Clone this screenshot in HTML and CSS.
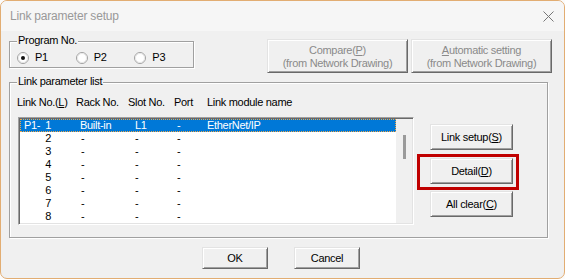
FILE: index.html
```html
<!DOCTYPE html>
<html>
<head>
<meta charset="utf-8">
<title>Link parameter setup</title>
<link rel="stylesheet" href="styles.css">
</head>
<body>
<div class="window">
  <div class="titlebar">
    <span class="title">Link parameter setup</span>
    <svg class="close" width="11" height="11" viewBox="0 0 11 11"><path d="M0.5 0.5 L10.5 10.5 M10.5 0.5 L0.5 10.5" stroke="#777" stroke-width="1" fill="none"/></svg>
  </div>

  <div class="top-row">
    <div class="group program">
      <span class="legend">Program No.</span>
      <div class="radios">
        <div class="radio">
          <svg width="12" height="12" viewBox="0 0 12 12"><circle cx="6" cy="6" r="5.5" fill="#fff" stroke="#a0a0a0"/><circle cx="6" cy="6" r="4.5" fill="none" stroke="#e6e6e6"/><circle cx="6" cy="6" r="2" fill="#111"/></svg>
          <span>P1</span>
        </div>
        <div class="radio">
          <svg width="12" height="12" viewBox="0 0 12 12"><circle cx="6" cy="6" r="5.5" fill="#fff" stroke="#a0a0a0"/><circle cx="6" cy="6" r="4.5" fill="none" stroke="#e6e6e6"/></svg>
          <span>P2</span>
        </div>
        <div class="radio">
          <svg width="12" height="12" viewBox="0 0 12 12"><circle cx="6" cy="6" r="5.5" fill="#fff" stroke="#a0a0a0"/><circle cx="6" cy="6" r="4.5" fill="none" stroke="#e6e6e6"/></svg>
          <span>P3</span>
        </div>
      </div>
    </div>
    <button class="btn wide compare" disabled>Compare(<u>P</u>)<br>(from Network Drawing)</button>
    <button class="btn wide auto" disabled><u>A</u>utomatic setting<br>(from Network Drawing)</button>
  </div>

  <div class="group list-group">
    <span class="legend">Link parameter list</span>
    <div class="list-col">
      <div class="header">
        <span class="h1">Link No.(<u>L</u>)</span>
        <span class="h2">Rack No.</span>
        <span class="h3">Slot No.</span>
        <span class="h4">Port</span>
        <span class="h5">Link module name</span>
      </div>
      <div class="listbox">
        <div class="rows">
          <div class="row selected"><span class="c1"><span class="pre">P1-</span><span class="num">1</span></span><span class="c2">Built-in</span><span class="c3">L1</span><span class="c4">-</span><span class="c5">EtherNet/IP</span></div>
          <div class="row"><span class="c1"><span class="pre"></span><span class="num">2</span></span><span class="c2 dash">-</span><span class="c3">-</span><span class="c4">-</span><span class="c5"></span></div>
          <div class="row"><span class="c1"><span class="pre"></span><span class="num">3</span></span><span class="c2 dash">-</span><span class="c3">-</span><span class="c4">-</span><span class="c5"></span></div>
          <div class="row"><span class="c1"><span class="pre"></span><span class="num">4</span></span><span class="c2 dash">-</span><span class="c3">-</span><span class="c4">-</span><span class="c5"></span></div>
          <div class="row"><span class="c1"><span class="pre"></span><span class="num">5</span></span><span class="c2 dash">-</span><span class="c3">-</span><span class="c4">-</span><span class="c5"></span></div>
          <div class="row"><span class="c1"><span class="pre"></span><span class="num">6</span></span><span class="c2 dash">-</span><span class="c3">-</span><span class="c4">-</span><span class="c5"></span></div>
          <div class="row"><span class="c1"><span class="pre"></span><span class="num">7</span></span><span class="c2 dash">-</span><span class="c3">-</span><span class="c4">-</span><span class="c5"></span></div>
          <div class="row"><span class="c1"><span class="pre"></span><span class="num">8</span></span><span class="c2 dash">-</span><span class="c3">-</span><span class="c4">-</span><span class="c5"></span></div>
        </div>
        <div class="scrollbar"><div class="thumb"></div></div>
      </div>
    </div>
    <div class="side-col">
      <button class="btn side">Link setup(<u>S</u>)</button>
      <div class="callout">
        <button class="btn side">Detail(<u>D</u>)</button>
      </div>
      <button class="btn side last">All clear(<u>C</u>)</button>
    </div>
  </div>

  <div class="footer">
    <button class="btn foot">OK</button>
    <button class="btn foot cancel">Cancel</button>
  </div>
</div>
</body>
</html>
```
FILE: styles.css
```css
* { box-sizing: border-box; }

html, body {
  margin: 0;
  padding: 0;
  background: #fbfbfb;
}

body {
  font-family: "Liberation Sans", Arial, sans-serif;
  font-size: 11px;
  line-height: 13px;
  letter-spacing: -0.3px;
  color: #000;
}

.window {
  width: 565px;
  height: 279px;
  border: 1px solid #e2ad72;
  border-radius: 7px;
  background: #f0f0f0;
  overflow: hidden;
  display: flex;
  flex-direction: column;
}

.titlebar {
  height: 30px;
  flex: none;
  background: #f6f6f6;
  display: flex;
  align-items: center;
  padding-left: 9px;
}

.title {
  font-size: 12px;
  letter-spacing: -0.2px;
  color: #999;
}

.close {
  margin-left: auto;
  margin-right: 10px;
  margin-top: 1px;
}

u { text-decoration: underline; text-underline-offset: 1px; }

/* group boxes (etched frame) */
.group {
  position: relative;
  border: 1px solid #a0a0a0;
  box-shadow: inset 1px 1px 0 #fff, 1px 1px 0 #fff;
}

.legend {
  position: absolute;
  top: -8px;
  left: 7px;
  padding: 0 1px;
  background: #f0f0f0;
  white-space: nowrap;
}

.top-row {
  display: flex;
  align-items: flex-start;
  margin-top: 8px;
  flex: none;
}

.program {
  margin-left: 8px;
  margin-top: 2px;
  width: 185px;
  height: 27px;
}

.radios {
  display: flex;
  padding-top: 9px;
  padding-left: 7px;
}

.radio {
  width: 61px;
  height: 13px;
  display: flex;
  align-items: center;
}

.radio svg { flex: none; }
.radio span { margin-left: 6px; }

/* buttons */
.btn {
  font-family: inherit;
  font-size: 11px;
  line-height: 13px;
  letter-spacing: -0.3px;
  color: #000;
  background: #f0f0f0;
  border: 1px solid;
  border-color: #e3e3e3 #696969 #696969 #e3e3e3;
  box-shadow: inset 1px 1px 0 #fff, inset -1px -1px 0 #a0a0a0;
  padding: 0;
  margin: 0;
  border-radius: 0;
  text-align: center;
}

.btn:disabled { color: #8a8a8a; }

.wide {
  width: 141px;
  height: 34px;
  padding-top: 1px;
}

.compare { margin-left: 73px; }
.auto { margin-left: 3px; }

.list-group {
  margin-left: 8px;
  margin-top: 9px;
  width: 539px;
  height: 156px;
  display: flex;
  flex: none;
}

.list-col {
  padding-left: 7px;
  padding-top: 13px;
}

.header {
  display: flex;
  height: 13px;
  white-space: nowrap;
}

.h1 { width: 59px; }
.h2 { width: 52px; }
.h3 { width: 46px; }
.h4 { width: 33px; }

.listbox {
  margin-top: 8px;
  margin-left: 1px;
  width: 396px;
  height: 108px;
  padding: 1px;
  border: 1px solid;
  border-color: #a0a0a0 #fff #fff #a0a0a0;
  box-shadow: inset 1px 1px 0 #696969, inset -1px -1px 0 #e3e3e3;
  display: flex;
}

.rows {
  width: 376px;
  background: #fff;
}

.row {
  display: flex;
  height: 13px;
  white-space: nowrap;
}

.row.selected {
  background: #0078d7;
  color: #fff;
  outline: 1px dotted #f0a848;
  outline-offset: -1px;
}

.c1 { width: 60px; padding-left: 4px; display: flex; }
.pre { width: 19px; }
.num { width: 8px; text-align: right; }
.c2 { width: 55px; }
.c2.dash { padding-left: 1px; }
.c3 { width: 42px; }
.c4 { width: 30px; }

.scrollbar {
  width: 16px;
  background: #f0f0f0;
  padding-top: 16px;
}

.thumb {
  width: 3px;
  height: 24px;
  margin: 0 auto;
  background: #9a9a9a;
}

.side-col {
  margin-left: 16px;
  margin-top: 41px;
  display: flex;
  flex-direction: column;
}

.side {
  width: 83px;
  height: 26px;
}

.callout {
  position: relative;
  margin-top: 8px;
}

.callout::after {
  content: "";
  position: absolute;
  left: -13px;
  top: -4px;
  right: -6px;
  bottom: -6px;
  border: 3px solid #c00000;
}

.last { margin-top: 7px; }

.footer {
  display: flex;
  margin-top: 9px;
  padding-left: 201px;
}

.foot {
  width: 66px;
  height: 22px;
}

.cancel { margin-left: 26px; }
```
